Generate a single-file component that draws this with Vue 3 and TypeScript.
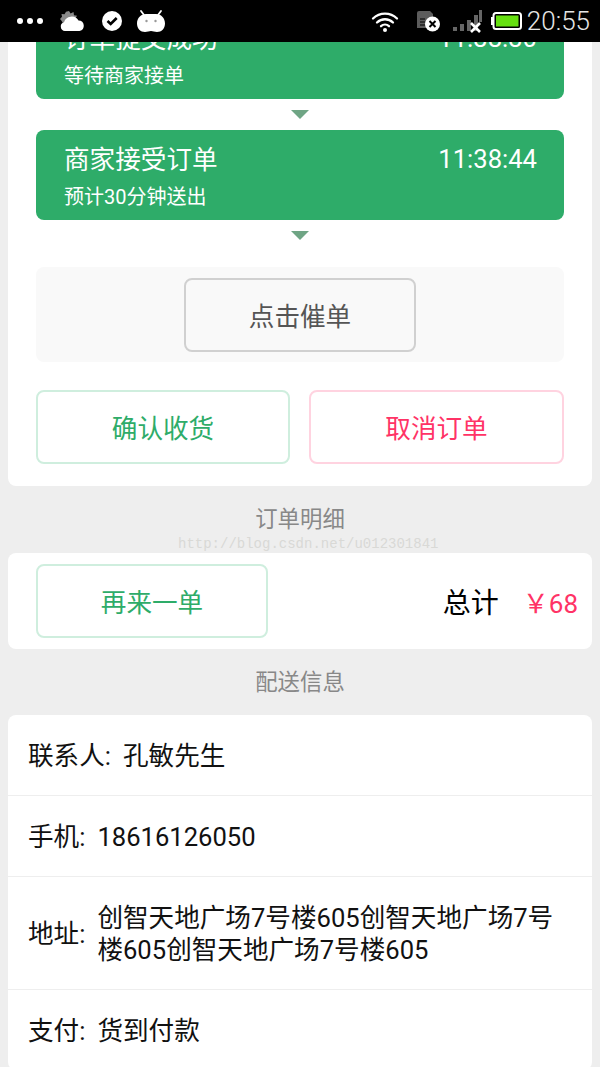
<script setup lang="ts">
interface Step {
  title: string
  time: string
  note: string
}

interface InfoRow {
  label: string
  value: string
}

const steps: Step[] = [
  { title: '订单提交成功', time: '11:38:30', note: '等待商家接单' },
  { title: '商家接受订单', time: '11:38:44', note: '预计30分钟送出' }
]

const rows: InfoRow[] = [
  { label: '联系人', value: '孔敏先生' },
  { label: '手机', value: '18616126050' },
  { label: '地址', value: '创智天地广场7号楼605创智天地广场7号楼605创智天地广场7号楼605' },
  { label: '支付', value: '货到付款' }
]
</script>

<template>
  <div class="screen">
    <div class="status-bar">
      <div class="status-left">
        <div class="dots"><i /><i /><i /></div>
        <!-- weather -->
        <svg class="ic-weather" width="26" height="22" viewBox="0 0 26 22">
          <path d="M10 1l1.6 2.6L14.5 2l.5 3.2 3 .6-1.5 2.4-8 6-4.500-1-1.500-2.500L1 9l2-2.200L2.500 4l3 .2L7 1.800z" fill="#8a8a8a" />
          <path d="M6 21a4.500 4.500 0 0 1-1-8.800A8 8 0 0 1 19.500 10.500 5.300 5.300 0 0 1 20.500 21z" fill="#fff" />
        </svg>
        <svg class="ic-check" width="22" height="22" viewBox="0 0 22 22">
          <circle cx="11" cy="11" r="10" fill="#fff" />
          <path d="M6.500 11l3.200 3 6-6" fill="none" stroke="#000" stroke-width="2.600" />
        </svg>
        <!-- android head -->
        <svg class="ic-droid" width="30" height="24" viewBox="0 0 30 24">
          <path d="M5 2l3 4M25 2l-3 4" stroke="#fff" stroke-width="1.800" stroke-linecap="round" />
          <path d="M10 5h10c5 0 9 4 9 9.500 0 5-3.500 8.500-8 8.500-2.500 0-4-1-6-1s-3.500 1-6 1c-4.500 0-8-3.500-8-8.500C1 9 5 5 10 5z" fill="#fff" />
          <circle cx="10.500" cy="12" r="1.200" fill="#999" />
          <circle cx="19.500" cy="12" r="1.200" fill="#999" />
        </svg>
      </div>
      <div class="status-right">
        <svg class="ic-wifi" width="28" height="22" viewBox="0 0 28 22">
          <path d="M2 8.500a17 17 0 0 1 24 0M6 12.500a11.500 11.500 0 0 1 16 0M10 16.200a6 6 0 0 1 8 0" fill="none" stroke="#fff" stroke-width="2.300" stroke-linecap="round" />
          <circle cx="14" cy="20" r="2" fill="#fff" />
        </svg>
        <svg class="ic-sim" width="26" height="22" viewBox="0 0 26 22">
          <path d="M4 1h11l3 3v14H2V3a2 2 0 0 1 2-2z" fill="#5c5c5c" />
          <path d="M5 9h5M5 12h5M5 15h5" stroke="#000" stroke-width="1.200" />
          <circle cx="17.500" cy="14" r="7.500" fill="#fff" />
          <path d="M14.500 11l6 6M20.500 11l-6 6" stroke="#000" stroke-width="2" />
        </svg>
        <svg class="ic-signal" width="30" height="24" viewBox="0 0 30 24">
          <rect x="0" y="18" width="4" height="4" fill="#666" />
          <rect x="7" y="15" width="4" height="7" fill="#666" />
          <rect x="14" y="11" width="4" height="11" fill="#666" />
          <rect x="21" y="6" width="4" height="16" fill="#666" />
          <rect x="26" y="1" width="3" height="12" fill="#666" />
          <path d="M18 14l9 9M27 14l-9 9" stroke="#fff" stroke-width="2.600" />
        </svg>
        <svg class="ic-battery" width="32" height="18" viewBox="0 0 32 18">
          <path d="M3 5H1v8h2z" fill="#fff" />
          <rect x="3.500" y="1" width="27.500" height="16" rx="2.500" fill="none" stroke="#fff" stroke-width="2" />
          <rect x="6" y="3.500" width="22.500" height="11" fill="#66e010" />
        </svg>
        <span class="clock">20:55</span>
      </div>
    </div>

    <div class="scroll">
      <section class="card progress">
        <template v-for="step in steps" :key="step.title">
          <div class="step">
            <div class="step-head">
              <span class="step-title">{{ step.title }}</span>
              <span class="step-time">{{ step.time }}</span>
            </div>
            <p class="step-note">{{ step.note }}</p>
          </div>
          <div class="arrow" />
        </template>
        <div class="urge-box">
          <button type="button" class="btn btn-urge">点击催单</button>
        </div>
        <div class="actions">
          <button type="button" class="btn btn-green">确认收货</button>
          <button type="button" class="btn btn-pink">取消订单</button>
        </div>
      </section>

      <h2 class="section-title detail-title">订单明细</h2>
      <section class="card total">
        <button type="button" class="btn btn-green btn-again">再来一单</button>
        <span class="total-label">总计</span>
        <span class="total-price">￥68</span>
      </section>

      <h2 class="section-title">配送信息</h2>
      <section class="card info">
        <div v-for="row in rows" :key="row.label" class="info-row">
          <span class="info-label">{{ row.label }}:</span>
          <span class="info-value">{{ row.value }}</span>
        </div>
      </section>
    </div>

    <!-- blog watermark baked into the screenshot -->
    <div class="watermark">http://blog.csdn.net/u012301841</div>
  </div>
</template>

<style scoped>
.screen {
  position: relative;
  width: 600px;
  height: 1067px;
  overflow: hidden;
  background: #eeeeee;
  font-family: Roboto, "Noto Sans CJK SC", sans-serif;
}

.status-bar {
  position: absolute;
  top: 0;
  left: 0;
  right: 0;
  z-index: 2;
  height: 42px;
  background: #000;
  display: flex;
  align-items: center;
  justify-content: space-between;
  padding: 0 10px 0 17px;
  box-sizing: border-box;
}

.status-left,
.status-right {
  display: flex;
  align-items: center;
}

.dots {
  display: flex;
  gap: 4px;
  margin-right: 16px;
}

.dots i {
  width: 6px;
  height: 6px;
  border-radius: 50%;
  background: #fff;
}

.ic-check {
  margin-left: 16px;
}

.ic-droid {
  margin-left: 13px;
}

.ic-sim {
  margin-left: 16px;
}

.ic-signal {
  margin-left: 12px;
}

.ic-battery {
  margin-left: 7px;
}

.clock {
  margin-left: 5px;
  font-size: 26px;
  font-weight: 300;
  color: #e6e6e6;
}

.scroll {
  margin-top: -40px;
}

.card {
  margin: 0 8px;
  background: #fff;
  border-radius: 8px;
}

.progress {
  padding: 49px 28px 22px;
}

.step {
  height: 90px;
  padding: 10px 27px 0 28px;
  box-sizing: border-box;
  background: #2eac69;
  border-radius: 8px;
  color: #fff;
}

.step-head {
  display: flex;
  align-items: center;
  justify-content: space-between;
  height: 38px;
}

.step-title {
  padding-bottom: 3px;
  font-size: 25.6px;
}

.step-time {
  font-size: 25.6px;
}

.step-note {
  margin: 4px 0 0;
  font-size: 20px;
  line-height: 30px;
}

.arrow {
  width: 0;
  height: 0;
  margin: 11px auto;
  border-left: 9px solid transparent;
  border-right: 9px solid transparent;
  border-top: 9px solid #6fa585;
}

.urge-box {
  display: flex;
  justify-content: center;
  margin-top: 27px;
  padding: 11px 0 10px;
  background: #f9f9f9;
  border-radius: 8px;
}

.btn {
  display: block;
  height: 74px;
  padding: 0 0 2px;
  background: #fff;
  border-radius: 8px;
  font-family: inherit;
  font-size: 25.6px;
}

.btn-urge {
  width: 232px;
  background: #f9f9f9;
  border: 2px solid #d0d0d0;
  color: #555;
}

.actions {
  display: flex;
  justify-content: space-between;
  margin-top: 28px;
}

.actions .btn {
  width: 254px;
}

.actions .btn-pink {
  width: 255px;
}

.btn-green {
  border: 2px solid #cfeede;
  color: #2eac69;
}

.btn-pink {
  border: 2px solid #ffd3e0;
  color: #ff3366;
}

.section-title {
  margin: 0;
  height: 66px;
  line-height: 66px;
  text-align: center;
  font-size: 22.4px;
  font-weight: 400;
  color: #888;
}

.detail-title {
  height: 67px;
}

.total {
  display: flex;
  align-items: center;
  height: 96px;
  padding: 0 14px 0 28px;
  box-sizing: border-box;
}

.btn-again {
  width: 232px;
}

.total-label {
  margin-left: auto;
  font-size: 28px;
  color: #000;
}

.total-price {
  margin-left: 24px;
  font-size: 26px;
  color: #ff3366;
}

.info {
  font-size: 25.6px;
  color: #111;
}

.info-row {
  display: flex;
  align-items: center;
  padding: 25px 36px 23px 20px;
  border-bottom: 1px solid #eeeeee;
  line-height: 32px;
}

.info-row:last-child {
  border-bottom: 0;
}

.info-label {
  flex-shrink: 0;
  margin-right: 12px;
}

.watermark {
  position: absolute;
  top: 535px;
  left: 178px;
  font-family: "Liberation Mono", monospace;
  font-size: 14px;
  line-height: 18px;
  color: #d9d9d6;
}
</style>
